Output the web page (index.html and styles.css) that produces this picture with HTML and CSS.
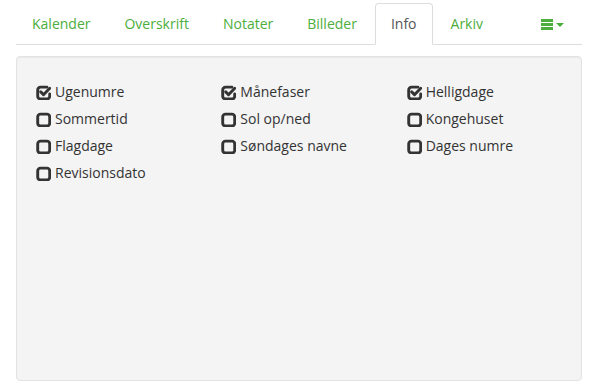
FILE: index.html
```html
<!DOCTYPE html>
<html>
<head>
<meta charset="utf-8">
<link rel="stylesheet" href="styles.css">
</head>
<body>
<div class="page">
  <ul class="tabs">
    <li><a href="#">Kalender</a></li>
    <li><a href="#">Overskrift</a></li>
    <li><a href="#">Notater</a></li>
    <li><a href="#">Billeder</a></li>
    <li class="active"><a href="#">Info</a></li>
    <li><a href="#">Arkiv</a></li>
    <li class="menu"><a href="#"><span class="bars"><i></i><i></i><i></i></span><span class="caret"></span></a></li>
  </ul>
  <div class="well">
    <div class="grid">
      <div class="col">
        <div class="opt"><svg class="ic" viewBox="0 0 14 14"><path d="M10.2 2H4.2A2.6 2.6 0 0 0 1.6 4.6v5.8A2.6 2.6 0 0 0 4.2 13h6a2.6 2.6 0 0 0 2.6-2.6V8.4" /><path d="M4.4 6.4l2.6 2.6 5.8-6" /></svg>Ugenumre</div>
        <div class="opt"><svg class="ic" viewBox="0 0 14 14"><rect x="1.6" y="2" width="11.2" height="11" rx="2.6"/></svg>Sommertid</div>
        <div class="opt"><svg class="ic" viewBox="0 0 14 14"><rect x="1.6" y="2" width="11.2" height="11" rx="2.6"/></svg>Flagdage</div>
        <div class="opt"><svg class="ic" viewBox="0 0 14 14"><rect x="1.6" y="2" width="11.2" height="11" rx="2.6"/></svg>Revisionsdato</div>
      </div>
      <div class="col">
        <div class="opt"><svg class="ic" viewBox="0 0 14 14"><path d="M10.2 2H4.2A2.6 2.6 0 0 0 1.6 4.6v5.8A2.6 2.6 0 0 0 4.2 13h6a2.6 2.6 0 0 0 2.6-2.6V8.4" /><path d="M4.4 6.4l2.6 2.6 5.8-6" /></svg>Månefaser</div>
        <div class="opt"><svg class="ic" viewBox="0 0 14 14"><rect x="1.6" y="2" width="11.2" height="11" rx="2.6"/></svg>Sol op/ned</div>
        <div class="opt"><svg class="ic" viewBox="0 0 14 14"><rect x="1.6" y="2" width="11.2" height="11" rx="2.6"/></svg>Søndages navne</div>
      </div>
      <div class="col">
        <div class="opt"><svg class="ic" viewBox="0 0 14 14"><path d="M10.2 2H4.2A2.6 2.6 0 0 0 1.6 4.6v5.8A2.6 2.6 0 0 0 4.2 13h6a2.6 2.6 0 0 0 2.6-2.6V8.4" /><path d="M4.4 6.4l2.6 2.6 5.8-6" /></svg>Helligdage</div>
        <div class="opt"><svg class="ic" viewBox="0 0 14 14"><rect x="1.6" y="2" width="11.2" height="11" rx="2.6"/></svg>Kongehuset</div>
        <div class="opt"><svg class="ic" viewBox="0 0 14 14"><rect x="1.6" y="2" width="11.2" height="11" rx="2.6"/></svg>Dages numre</div>
      </div>
    </div>
  </div>
</div>
</body>
</html>
```

FILE: styles.css
```css
* { box-sizing: border-box; }
html, body { margin: 0; padding: 0; background: #fff; }
body {
  font-family: "Open Sans", "Liberation Sans", sans-serif;
  font-size: 14px;
  line-height: 20px;
  color: #333;
}
.page {
  width: 566px;
  margin-left: 16px;
  padding-top: 3px;
}
.tabs {
  list-style: none;
  margin: 0;
  padding: 0;
  display: flex;
  border-bottom: 1px solid #ddd;
}
.tabs li {
  margin-bottom: -1px;
  margin-right: 2px;
}
.tabs a {
  display: block;
  padding: 10px 15px;
  border: 1px solid transparent;
  border-radius: 4px 4px 0 0;
  color: #4cae3c;
  text-decoration: none;
  line-height: 20px;
}
.tabs li.active a {
  color: #555;
  background: #fff;
  border-color: #ddd #ddd transparent #ddd;
}
.tabs li.menu { margin-left: auto; margin-right: 0; }
.tabs li.menu a {
  display: flex;
  align-items: center;
  height: 42px;
  padding: 0 17px 0 15px;
}
.bars {
  display: flex;
  flex-direction: column;
  justify-content: space-between;
  width: 12px;
  height: 11px;
}
.bars i {
  display: block;
  height: 3px;
  background: #4cae3c;
}
.caret {
  width: 0;
  height: 0;
  margin-left: 3px;
  margin-top: 1px;
  border-top: 4px solid #4cae3c;
  border-left: 4px solid transparent;
  border-right: 4px solid transparent;
}
.well {
  margin-top: 11px;
  height: 325px;
  background: #f4f4f4;
  border: 1px solid #e3e3e3;
  border-radius: 4px;
  box-shadow: inset 0 1px 1px rgba(0,0,0,.05);
  padding: 25px 19px 19px 19px;
}
.grid {
  display: grid;
  grid-template-columns: repeat(3, 1fr);
  margin: 0 -15px;
}
.col {
  padding: 0 15px;
  display: flex;
  flex-direction: column;
  gap: 7px;
}
.opt {
  display: flex;
  align-items: center;
  height: 20px;
}
.ic {
  width: 15px;
  height: 15px;
  margin-right: 4px;
  fill: none;
  stroke: #333;
  stroke-width: 2.7;
  stroke-linecap: round;
  stroke-linejoin: round;
  flex: none;
}
```
